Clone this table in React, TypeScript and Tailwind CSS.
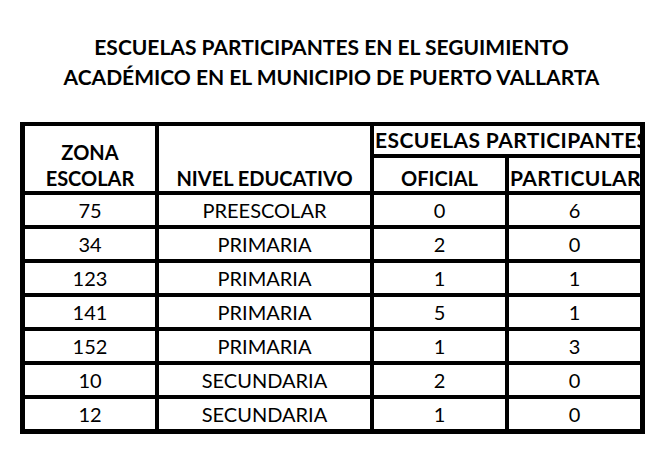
const filas = [
  { zona: '75', nivel: 'PREESCOLAR', oficial: 0, particular: 6 },
  { zona: '34', nivel: 'PRIMARIA', oficial: 2, particular: 0 },
  { zona: '123', nivel: 'PRIMARIA', oficial: 1, particular: 1 },
  { zona: '141', nivel: 'PRIMARIA', oficial: 5, particular: 1 },
  { zona: '152', nivel: 'PRIMARIA', oficial: 1, particular: 3 },
  { zona: '10', nivel: 'SECUNDARIA', oficial: 2, particular: 0 },
  { zona: '12', nivel: 'SECUNDARIA', oficial: 1, particular: 0 },
];

// Tabla de escuelas participantes por zona escolar
export default function App() {
  return (
    <div className="w-[663px] h-[450px] bg-white text-black font-['Lato',sans-serif] overflow-hidden">
      <h1 className="pt-[32px] text-center text-[21px] font-bold leading-[30px]">
        ESCUELAS PARTICIPANTES EN EL SEGUIMIENTO
        <br />
        ACADÉMICO EN EL MUNICIPIO DE PUERTO VALLARTA
      </h1>

      <div className="mt-[30px] ml-[20px] w-[625px] grid grid-cols-[130px_211px_131px_131px] grid-rows-[28px_33px_repeat(7,30px)] gap-[4px] bg-black p-[4px] pl-[5px] pr-[5px] pb-[5px]">
        {/* Encabezado */}
        <div className="row-span-2 bg-white flex flex-col items-center justify-end text-[20px] font-bold leading-[26px]">
          <span>ZONA</span>
          <span>ESCOLAR</span>
        </div>
        <div className="row-span-2 bg-white flex items-end justify-center text-[20px] font-bold leading-[26px]">
          NIVEL EDUCATIVO
        </div>
        <div className="col-span-2 bg-white flex items-center overflow-hidden whitespace-nowrap text-[21px] font-bold tracking-[0.4px] pl-[1px]">
          ESCUELAS PARTICIPANTES
        </div>
        <div className="bg-white flex items-end justify-center text-[20px] font-bold leading-[26px]">
          OFICIAL
        </div>
        <div className="bg-white flex items-end overflow-hidden whitespace-nowrap text-[21px] font-bold tracking-[0.4px] leading-[26px] pl-[1px]">
          PARTICULAR
        </div>

        {/* Filas de datos */}
        {filas.map((f) => (
          <>
            <div key={f.zona + 'z'} className="bg-white flex items-center justify-center text-[20px]">{f.zona}</div>
            <div key={f.zona + 'n'} className="bg-white flex items-center justify-center text-[20px]">{f.nivel}</div>
            <div key={f.zona + 'o'} className="bg-white flex items-center justify-center text-[20px]">{f.oficial}</div>
            <div key={f.zona + 'p'} className="bg-white flex items-center justify-center text-[20px]">{f.particular}</div>
          </>
        ))}
      </div>
    </div>
  );
}
